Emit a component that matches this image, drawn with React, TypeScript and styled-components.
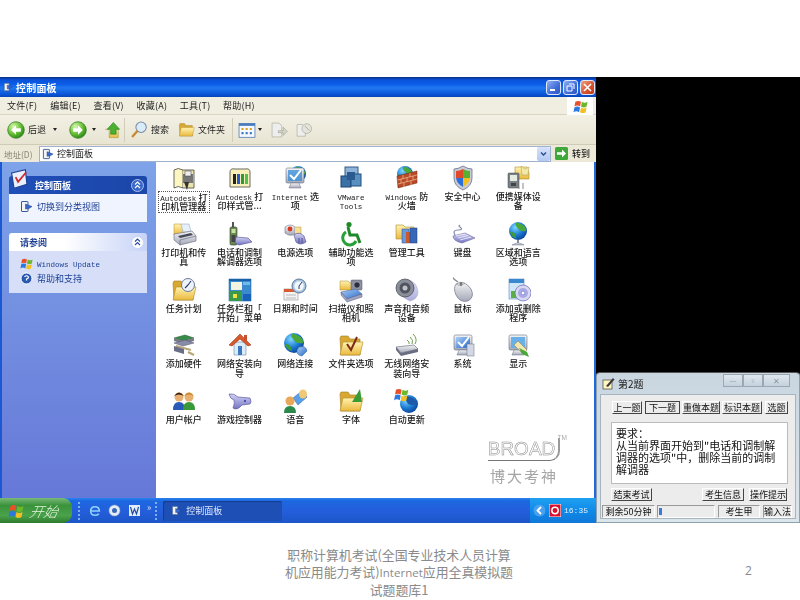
import React from "react";
import styled, { createGlobalStyle } from "styled-components";

const CJK = `"Noto Sans CJK SC", "Liberation Sans", sans-serif`;

const Global = createGlobalStyle`
  html, body { margin: 0; padding: 0; background: #fff; overflow: hidden; }
  #root { width: 800px; height: 600px; }
  * { box-sizing: border-box; }
`;

const Slide = styled.div`
  width: 800px; height: 600px; background: #fff; display: flex; flex-direction: column;
  padding-top: 77px; font-family: ${CJK}; position: relative;
`;
const Screen = styled.div`
  display: flex; height: 446px; filter: blur(0.35px); flex: none;
`;
const Win = styled.div`
  width: 596px; flex: none; display: flex; flex-direction: column; background: #ece9d8;
  position: relative;
`;
const TitleBar = styled.div`
  height: 20px; flex: none; display: flex; align-items: center; padding: 0 1px 0 3px;
  background: linear-gradient(180deg, #0a2f86 0, #0a52d8 14%, #0b5ce8 35%, #1f78f0 55%, #0a56da 85%, #0846b8 100%);
`;
const TitleText = styled.span`
  color: #fff; font-size: 10px; font-weight: 700; margin-left: 3px; flex: 1; letter-spacing: 0.2px;
`;
const WinBtn = styled.span<{ $red?: boolean }>`
  width: 15px; height: 15px; margin-left: 2px; border-radius: 3px; border: 1px solid #dfe8fb;
  display: flex; align-items: center; justify-content: center;
  background: ${(p) => (p.$red ? "linear-gradient(135deg,#f0a080,#d8502c 60%,#c03a18)" : "linear-gradient(135deg,#8fb0f0,#3f6cd8 60%,#3058c0)")};
`;
const MenuBar = styled.div`
  height: 18px; flex: none; display: flex; align-items: center; padding: 0 0 0 7px;
  background: #f0eee0; border-bottom: 1px solid #d8d4c0; position: relative;
`;
const MenuItem = styled.span`
  width: 43.2px; font-size: 9px; letter-spacing: 0.25px; color: #222; white-space: nowrap;
`;
const LogoBox = styled.div`
  position: absolute; right: 3px; top: 0; width: 26px; height: 18px; background: #fff;
  display: flex; align-items: center; justify-content: center;
`;
const Toolbar = styled.div`
  height: 30px; flex: none; display: flex; align-items: center; padding-left: 7px;
  background: linear-gradient(180deg, #f3f1e5, #e7e4d2); border-bottom: 1px solid #cfcbb6;
`;
const Slot = styled.span<{ $ml?: number }>`
  margin-left: ${(p) => p.$ml ?? 0}px; display: flex; align-items: center; flex: none;
`;
const ToolText = styled.span<{ $ml?: number }>`
  margin-left: ${(p) => p.$ml ?? 3}px; font-size: 9px; color: #222; white-space: nowrap; flex: none;
`;
const Caret = styled.span<{ $ml: number }>`
  margin-left: ${(p) => p.$ml}px; width: 0; height: 0; flex: none;
  border-left: 2.5px solid transparent; border-right: 2.5px solid transparent; border-top: 3px solid #222;
`;
const Sep = styled.span<{ $ml: number }>`
  margin-left: ${(p) => p.$ml}px; width: 1px; height: 24px; background: #d0ccb8; flex: none;
`;
const AddrBar = styled.div`
  height: 17px; flex: none; display: flex; align-items: center; padding-left: 4px;
  background: #ece9d8;
`;
const AddrLabel = styled.span`
  width: 35px; font-size: 8.5px; color: #8a8878; white-space: nowrap; flex: none;
`;
const AddrInput = styled.div`
  width: 512px; height: 16px; flex: none; background: #fff; border: 1px solid #9fb2cf; display: flex;
  align-items: center; padding-left: 2px; font-size: 9px; color: #222;
`;
const AddrText = styled.span`
  margin-left: 3px; flex: 1;
`;
const Drop = styled.span`
  width: 13px; height: 14px; border-radius: 2px; background: linear-gradient(180deg,#d6e2fa,#b4c8f2);
  display: flex; align-items: center; justify-content: center;
`;
const GoText = styled.span`
  margin-left: 4px; font-size: 9px; color: #222; font-weight: 500;
`;
const Main = styled.div`
  flex: 1; display: flex; min-height: 0; background: #fff; border-left: 2px solid #1a58d4; border-right: 2px solid #2068e0;
`;
const Side = styled.div`
  width: 154px; flex: none; background: linear-gradient(180deg, #7ea3e8, #6678d8); padding: 14px 9px 0 7px;
  display: flex; flex-direction: column;
`;
const PanelHead = styled.div<{ $dark?: boolean }>`
  height: 18px; display: flex; align-items: center; border-radius: 3px 3px 0 0; padding-right: 3px; position: relative;
  background: ${(p) => (p.$dark ? "linear-gradient(90deg,#1f4fb8,#1c46a8)" : "linear-gradient(90deg,#fff 40%,#c6d3f7)")};
`;
const PanelTitle = styled.span<{ $dark?: boolean; $ml: number }>`
  flex: 1; margin-left: ${(p) => p.$ml}px; font-size: 9px; font-weight: 700;
  color: ${(p) => (p.$dark ? "#fff" : "#1c3f94")};
`;
const PanelIcon = styled.span`
  position: absolute; left: 1px; top: -7px; display: flex;
`;
const Chevron = styled.span<{ $dark?: boolean }>`
  width: 13px; height: 13px; border-radius: 50%; display: flex; align-items: center; justify-content: center;
  background: ${(p) => (p.$dark ? "#3a68c8" : "#fff")}; border: 1px solid ${(p) => (p.$dark ? "#a9c0ee" : "#c6d3f7")};
`;
const PanelBody = styled.div<{ $tone: string; $h: number; $mb?: number }>`
  height: ${(p) => p.$h}px; background: ${(p) => p.$tone}; padding: 5px 0 0 11px;
  margin-bottom: ${(p) => p.$mb ?? 0}px; display: flex; flex-direction: column; gap: 1px;
`;
const SideLink = styled.div`
  display: flex; align-items: center; height: 14px; font-size: 9px; color: #1c3f94; white-space: nowrap;
`;
const SideLabel = styled.span`
  margin-left: 4px;
`;
const Mono = styled.span`
  font-family: "Liberation Mono", monospace; font-size: 7.5px; line-height: 1px;
`;
const Grid = styled.div`
  flex: 1; display: grid; grid-template-columns: repeat(7, 55.75px); grid-auto-rows: 55.75px; padding-top: 2px; position: relative;
  align-content: start;
`;
const Item = styled.div`
  display: flex; flex-direction: column; align-items: center; padding-top: 1px;
`;
const Label = styled.div<{ $sel?: boolean }>`
  margin-top: ${(p) => (p.$sel ? 0 : 1)}px; font-size: 9px; font-weight: 500; line-height: 9.4px; text-align: center; color: #1a1a1a;
  width: ${(p) => (p.$sel ? "52px" : "50px")}; white-space: pre-line;
  padding: ${(p) => (p.$sel ? "0.5px 0" : "0")}; border: ${(p) => (p.$sel ? "1px dotted #555" : "none")};
`;
const Watermark = styled.div`
  position: absolute; left: 333px; top: 276px; width: 70px; display: flex; flex-direction: column; align-items: center;
`;
const Broad = styled.span`
  font-family: "Liberation Sans", sans-serif; font-size: 19px; line-height: 22px; color: #fff;
  -webkit-text-stroke: 0.5px #8a8a8a; border-bottom: 1.5px solid #777; border-right: 2px solid #999; border-radius: 0 0 10px 0; padding-right: 3px;
`;
const Tm = styled.span`
  position: absolute; right: -8px; top: -4px; font-size: 6.5px; line-height: 8px; color: #aaa; font-family: "Liberation Sans", sans-serif;
`;
const WmCn = styled.span`
  font-size: 15px; line-height: 17px; margin-top: 6px; letter-spacing: 2px; color: #a5a5a5; white-space: nowrap;
`;
const Taskbar = styled.div`
  height: 25px; flex: none; display: flex; align-items: center; position: relative;
  background: linear-gradient(180deg, #2a82ee 0, #1c68e0 12%, #245edb 50%, #1d56c8 100%);
`;
const Start = styled.div`
  width: 72px; height: 100%; border-radius: 0 9px 9px 0; display: flex; align-items: center; padding-left: 8px;
  background: linear-gradient(180deg, #78b878, #3a923a 30%, #4aa24a 70%, #2e7a2e); flex: none;
`;
const StartText = styled.span`
  margin-left: 6px; font-style: italic; color: #e8f5e0; font-size: 14px;
  font-family: "Noto Sans CJK SC", serif; transform: skewX(-12deg); font-weight: 300;
`;
const Dots = styled.span<{ $ml: number }>`
  margin-left: ${(p) => p.$ml}px; width: 2px; height: 18px; flex: none;
  background: repeating-linear-gradient(180deg,#7fb0f0 0 2px,transparent 2px 4px);
`;
const Quick = styled.span<{ $ml: number }>`
  margin-left: ${(p) => p.$ml}px; flex: none; display: flex; align-items: center;
`;
const More = styled.span`
  margin-left: 6px; color: #cfe0ff; font-size: 9px; margin-top: -6px; flex: none;
`;
const TaskBtn = styled.div`
  margin-left: 6px; width: 119px; height: 20px; background: #1e4fb4; border-radius: 2px; display: flex; align-items: center;
  padding-left: 8px; color: #e0e8ff; font-size: 9px; flex: none; box-shadow: inset 1px 1px 1px #163c8c;
`;
const TaskText = styled.span`
  margin-left: 4px;
`;
const Tray = styled.div`
  margin-left: auto; height: 100%; width: 66px; flex: none; display: flex; align-items: center; padding-left: 3px;
  background: linear-gradient(180deg,#1fa0f0,#0f8ae8 50%,#1078d8);
`;
const Clock = styled.span`
  margin-left: 3px; color: #dff0ff; font-size: 8px; font-family: "Liberation Mono", monospace;
`;
const Right = styled.div`
  flex: 1; display: flex; flex-direction: column; background: #000;
`;
const Filler = styled.div`
  flex: 1;
`;
const Dialog = styled.div`
  height: 151px; flex: none; background: linear-gradient(180deg,#c9d6e0,#dbe5ec); padding: 0 3px 3px; border: 1px solid #8ea0ad; border-top: 1px solid #555;
  border-radius: 4px 4px 0 0; display: flex; flex-direction: column;
`;
const DlgTitle = styled.div`
  height: 21px; flex: none; display: flex; align-items: center; font-size: 10px; color: #222; padding-left: 2px;
`;
const DlgName = styled.span`
  margin-left: 3px; flex: 1;
`;
const DlgCtl = styled.span<{ $w: number }>`
  width: ${(p) => p.$w}px; height: 13px; flex: none; border: 1px solid #9aa8b4; margin-top: -6px; display: flex; align-items: center; justify-content: center;
  background: linear-gradient(180deg,#dfe7ee,#c4d1dc); color: #8a98a4; font-size: 8px; line-height: 10px;
`;
const DlgBody = styled.div`
  flex: 1; background: #ececec; border: 1px solid #a8b4bd; display: flex; flex-direction: column; padding: 6px 3px 2px 3px; min-height: 0;
`;
const BtnRow = styled.div<{ $ml: number }>`
  display: flex; align-items: center; padding-left: ${(p) => p.$ml}px; height: 13px; flex: none;
`;
const QBtn = styled.span<{ $w: number; $ml: number; $on?: boolean }>`
  width: ${(p) => p.$w}px; margin-left: ${(p) => p.$ml}px; height: 13px; flex: none; font-size: 9px; line-height: 11px; text-align: center; color: #111;
  white-space: nowrap; background: #ececec;
  border: 1px solid ${(p) => (p.$on ? "#444" : "#fff")};
  border-right-color: #444; border-bottom-color: #444;
`;
const QText = styled.div`
  margin: 8px 0 0 7px; width: 177px; height: 62px; flex: none; background: #fff; border: 1px solid #bbb; padding: 4px 3px 0 4px;
  font-size: 11px; line-height: 12px; color: #111;
`;
const BtnRow2 = styled(BtnRow)`
  margin-top: 3px; height: 14px;
`;
const Status = styled.div`
  margin-top: 4px; display: flex; height: 13px; flex: none; align-items: stretch;
`;
const Cell = styled.span<{ $w: number; $ml?: number }>`
  width: ${(p) => p.$w}px; margin-left: ${(p) => p.$ml ?? 0}px; flex: none; font-size: 9px; line-height: 11px; text-align: center; color: #111;
  white-space: nowrap; border: 1px solid #999; border-right-color: #fff; border-bottom-color: #fff; display: flex; align-items: center; justify-content: center;
`;
const ProgressCell = styled(Cell)`
  justify-content: flex-start; padding: 2px 1px;
`;
const ProgressFill = styled.span`
  width: 3px; height: 100%; background: #3a7ad8;
`;
const Footer = styled.div`
  width: 230px; margin: 23px 0 0 284px; text-align: center; color: #8a8a8a; font-size: 12.9px; line-height: 17px; white-space: nowrap;
  font-family: "Noto Sans CJK SC", "Open Sans", sans-serif;
`;
const FooterLat = styled.span`
  font-family: "Open Sans", sans-serif; font-size: 11.5px;
`;
const PageNo = styled.span`
  position: absolute; left: 745px; top: 562px; font-size: 12px; color: #8a8a8a; font-family: "Open Sans", sans-serif;
`;

/* ---------- drawings ---------- */
const Defs = () => (
  <svg width="0" height="0" style={{ position: "absolute" }}>
    <defs>
      <linearGradient id="fo" x1="0" y1="0" x2="0" y2="1"><stop offset="0" stopColor="#fff3b0" /><stop offset="1" stopColor="#eab93e" /></linearGradient>
      <radialGradient id="gl" cx=".35" cy=".3" r=".8"><stop offset="0" stopColor="#7fd8ff" /><stop offset=".55" stopColor="#1a78d0" /><stop offset="1" stopColor="#0a3a90" /></radialGradient>
      <radialGradient id="gn" cx=".35" cy=".3" r=".8"><stop offset="0" stopColor="#d8f8b0" /><stop offset=".6" stopColor="#5cb82c" /><stop offset="1" stopColor="#1f7a1a" /></radialGradient>
      <linearGradient id="gy" x1="0" y1="0" x2="0" y2="1"><stop offset="0" stopColor="#f4f4f4" /><stop offset="1" stopColor="#a4a8b8" /></linearGradient>
      <linearGradient id="pu" x1="0" y1="0" x2="0" y2="1"><stop offset="0" stopColor="#d4d4f4" /><stop offset="1" stopColor="#7474c4" /></linearGradient>
      <linearGradient id="mo" x1="0" y1="0" x2="1" y2="1"><stop offset="0" stopColor="#a8d0f8" /><stop offset="1" stopColor="#2a68c8" /></linearGradient>
    </defs>
  </svg>
);

const Svg = ({ s = 26, children }: { s?: number; children: React.ReactNode }) => (
  <svg width={s} height={s} viewBox="0 0 26 26" style={{ flex: "none", display: "block" }}>{children}</svg>
);

const Fold = () => (
  <>
    <path d="M2 6 L3 4 H10 L12 7 H22 V23 H3 Z" fill="#d8a832" stroke="#a07d20" strokeWidth=".6" />
    <path d="M2 23 L5 10 H25 L22 23 Z" fill="url(#fo)" stroke="#b08a2a" strokeWidth=".6" />
  </>
);
const Flag = ({ x = 0, y = 0, k = 1 }: { x?: number; y?: number; k?: number }) => (
  <g transform={`translate(${x} ${y}) scale(${k})`}>
    <path d="M1 3 Q4 1 7 3 L6 8 Q3 6 0 8Z" fill="#e8502a" />
    <path d="M8 3 Q11 5 14 3 L13 8 Q10 10 7 8Z" fill="#6cb82c" />
    <path d="M0 9 Q3 7 6 9 L5 14 Q2 12 -1 14Z" fill="#2a78e0" />
    <path d="M7 9 Q10 11 13 9 L12 14 Q9 16 6 14Z" fill="#f4c020" />
  </g>
);
const Globe = ({ cx = 13, cy = 12, r = 9 }: { cx?: number; cy?: number; r?: number }) => (
  <>
    <circle cx={cx} cy={cy} r={r} fill="url(#gl)" />
    <path d={`M${cx - r * 0.2} ${cy - r * 0.95} Q${cx + r} ${cy - r * 0.7} ${cx + r * 0.9} ${cy} Q${cx + r * 0.2} ${cy + r * 0.1} ${cx} ${cy - r * 0.3} Q${cx - r * 0.4} ${cy - r * 0.7} ${cx - r * 0.2} ${cy - r * 0.95}Z`} fill="#4aa83a" />
    <path d={`M${cx - r * 0.9} ${cy + r * 0.1} Q${cx - r * 0.3} ${cy} ${cx - r * 0.2} ${cy + r * 0.8} Q${cx - r * 0.7} ${cy + r * 0.7} ${cx - r * 0.9} ${cy + r * 0.1}Z`} fill="#3f9a38" />
  </>
);
const Monitor = ({ screen = "url(#mo)" }: { screen?: string }) => (
  <>
    <rect x="4" y="3" width="18" height="15" rx="1.5" fill="url(#gy)" stroke="#6a7088" strokeWidth=".6" />
    <rect x="6" y="5" width="14" height="11" fill={screen} />
    <path d="M9 18 H17 L19 23 H7 Z" fill="url(#gy)" stroke="#6a7088" strokeWidth=".5" />
  </>
);
const Check = ({ c = "#fff", w = 2 }: { c?: string; w?: number }) => (
  <path d="M8 10 L12 14 L19 5" fill="none" stroke={c} strokeWidth={w} />
);
const Person = ({ x, c, h }: { x: number; c: string; h: string }) => (
  <>
    <circle cx={x} cy="9" r="4.5" fill="#e8b070" />
    <path d={`M${x - 5} 8 Q${x} 1 ${x + 5} 8 Q${x} 5 ${x - 5} 8Z`} fill={h} />
    <path d={`M${x - 6} 22 Q${x - 6} 14 ${x} 14 Q${x + 6} 14 ${x + 6} 22Z`} fill={c} />
  </>
);

const icons: React.ReactNode[] = [
  <Svg key="0"><path d="M3 5 Q7 2 12 5 V23 Q7 20 3 23Z" fill="#fdf6c0" stroke="#444" strokeWidth=".8" /><path d="M12 5 H23 V23 H12" fill="#ece4a8" stroke="#444" strokeWidth=".8" /><rect x="12" y="9" width="10" height="9" fill="#777" /><rect x="14" y="6" width="6" height="5" fill="#eee" stroke="#444" strokeWidth=".5" /><path d="M13 17 l3 8 l2 -8Z" fill="#333" /></Svg>,
  <Svg key="1"><path d="M3 7 Q3 3 8 4 H18 Q23 3 23 7 V22 H3Z" fill="#f8f0b8" stroke="#444" strokeWidth=".8" /><rect x="6" y="9" width="3" height="10" fill="#222" /><rect x="10" y="9" width="3" height="10" fill="#2a58c8" /><rect x="14" y="9" width="3" height="10" fill="#2a9a3a" /><rect x="18" y="9" width="3" height="10" fill="#50c050" /></Svg>,
  <Svg key="2"><Globe cx={16} cy={9} r={8} /><Monitor screen="none" /><rect x="6" y="5" width="14" height="11" fill="#2a88d8" opacity=".7" /><Check /></Svg>,
  <Svg key="3"><rect x="7" y="2" width="13" height="12" fill="#8fb4d8" stroke="#345a8a" /><rect x="3" y="11" width="10" height="11" fill="#3a72a8" stroke="#1f4270" /><rect x="13" y="9" width="10" height="12" fill="#5a90c0" stroke="#234e7e" /><rect x="9" y="7" width="8" height="8" fill="#2a5a90" /></Svg>,
  <Svg key="4"><Globe cx={11} cy={9} r={8} /><path d="M3 11 L23 6 V18 L4 23Z" fill="#b84a28" stroke="#6a2210" strokeWidth=".5" /><path d="M3.5 15 L23 10 M4 19 L23 14 M9 10 V14 M16 8 V12 M7 14 V18 M13 13 V17 M19 11 V15 M10 18 V22 M17 16 V20" stroke="#ecb28a" strokeWidth=".8" fill="none" /></Svg>,
  <Svg key="5"><path d="M13 1 Q18 4 22 4 V13 Q22 21 13 25 Q4 21 4 13 V4 Q8 4 13 1Z" fill="#c8ccd8" stroke="#59607a" strokeWidth=".7" /><path d="M13 4 V13 H6 V6 Q10 6 13 4Z" fill="#e04a28" /><path d="M13 4 Q16 6 20 6 V13 H13Z" fill="#58b030" /><path d="M6 13 H13 V22 Q7 19 6 13Z" fill="#2a70d8" /><path d="M13 13 H20 Q19 19 13 22Z" fill="#f4c020" /></Svg>,
  <Svg key="6"><path d="M10 2 H22 L24 8 V14 H10Z" fill="url(#fo)" stroke="#b08a2a" strokeWidth=".6" /><path d="M16 1 L20 4 L24 2 L23 10 L17 10Z" fill="#f4e8a8" stroke="#a89a50" strokeWidth=".5" /><rect x="3" y="8" width="11" height="15" rx="1" fill="#7a8088" stroke="#444" strokeWidth=".5" /><rect x="5" y="10" width="7" height="6" fill="#e4ece0" /><path d="M14 22 V24 M18 18 V24" stroke="#888" /><rect x="6" y="18" width="5" height="3" fill="#444" /></Svg>,
  <Svg key="7"><path d="M3 3 H10 L12 6 H18 V14 H3Z" fill="url(#fo)" stroke="#b08a2a" strokeWidth=".5" /><path d="M10 3 H18 L20 11 H12Z" fill="#e8f0fa" stroke="#8a9ab8" strokeWidth=".5" /><path d="M3 13 L21 10 L25 15 V20 L9 24 L3 19Z" fill="url(#gy)" stroke="#606478" strokeWidth=".6" /><path d="M9 24 V19 L25 15" fill="none" stroke="#606478" strokeWidth=".6" /><path d="M7 15 L20 12 L22 14 L9 17Z" fill="#444858" /></Svg>,
  <Svg key="8"><rect x="5" y="1" width="2" height="6" fill="#555" /><rect x="3" y="6" width="7" height="18" rx="1.5" fill="#6a8a50" stroke="#333" strokeWidth=".6" /><rect x="4.5" y="8" width="4" height="4" fill="#c8e0a0" /><rect x="4.5" y="14" width="4" height="7" fill="#444" /><path d="M9 16 L21 17 L25 21 L12 24 L8 22Z" fill="url(#pu)" stroke="#4a4a90" strokeWidth=".6" /></Svg>,
  <Svg key="9"><path d="M3 6 Q8 2 13 6 L13 13 Q8 16 3 12Z" fill="url(#gy)" stroke="#707488" strokeWidth=".6" /><circle cx="8" cy="8" r="2.4" fill="#d83a20" /><path d="M13 6 H19 V13 H13" fill="#f8e090" stroke="#a89048" strokeWidth=".5" /><path d="M12 14 Q17 10 22 15 L24 21 Q18 25 14 21Z" fill="url(#pu)" stroke="#50508a" strokeWidth=".6" /><path d="M17 17 V22 M20 17 V22" stroke="#50508a" /></Svg>,
  <Svg key="10"><circle cx="11" cy="3.5" r="2.6" fill="#1f8a2a" /><path d="M10 6 L12 14 H19 L22 22" fill="none" stroke="#1f8a2a" strokeWidth="3" /><path d="M8 11 A7 7 0 1 0 18 20" fill="none" stroke="#2aa03a" strokeWidth="3" /></Svg>,
  <Svg key="11"><path d="M2 4 H9 L11 6 H20 V18 H2Z" fill="url(#fo)" stroke="#a88a30" strokeWidth=".6" /><rect x="8" y="8" width="7" height="14" fill="#6a98d8" stroke="#2a4a88" strokeWidth=".5" /><rect x="12" y="11" width="4" height="11" fill="#c85a30" /><rect x="16" y="7" width="7" height="15" fill="#3a68b8" stroke="#1a3a78" strokeWidth=".5" /></Svg>,
  <Svg key="12"><path d="M3 15 L15 12 L25 17 L12 22 Q3 20 3 15Z" fill="url(#pu)" stroke="#6a6a98" strokeWidth=".6" /><path d="M6 15 L15 13 M8 17 L18 14.5 M10 19 L21 16" stroke="#f4f4ff" strokeWidth=".8" /><path d="M5 14 Q2 9 8 9 Q14 9 10 6 Q8 5 10 4" fill="none" stroke="#8088a8" strokeWidth="1.2" /></Svg>,
  <Svg key="13"><Globe cx={13} cy={10} r={9} /><path d="M13 19 V22" stroke="#8a8ea0" strokeWidth="2" /><path d="M7 24 Q13 20 19 24Z" fill="url(#gy)" stroke="#707488" strokeWidth=".5" /></Svg>,
  <Svg key="14"><Fold /><circle cx="17" cy="8" r="6.5" fill="#eef2fa" stroke="#6a7a9a" /><path d="M17 8 L20 4 M17 8 L14 11" stroke="#2a3a6a" strokeWidth="1.1" /></Svg>,
  <Svg key="15"><rect x="2" y="2" width="22" height="22" fill="#3a8ad0" stroke="#1a5a9a" strokeWidth=".5" /><rect x="4" y="5" width="11" height="8" fill="#f4f4e0" /><rect x="2" y="14" width="13" height="10" fill="#3a9a4a" /><rect x="6" y="17" width="4" height="4" fill="#f4e040" /><rect x="16" y="5" width="7" height="3" fill="#70b8f0" /><rect x="16" y="17" width="8" height="7" fill="#1860b8" /><rect x="2" y="2" width="22" height="2" fill="#1860a8" /></Svg>,
  <Svg key="16"><rect x="2" y="12" width="14" height="11" fill="#f4f4f4" stroke="#909090" strokeWidth=".6" /><rect x="2" y="12" width="14" height="3" fill="#d85a30" /><path d="M4 18 H14 M4 21 H14" stroke="#b8b8b8" /><circle cx="17" cy="9" r="7" fill="#a8c4e0" stroke="#5a7a9a" /><circle cx="17" cy="9" r="4.8" fill="#f0f6fc" /><path d="M17 9 L20 5 M17 9 V12" stroke="#2a3a6a" strokeWidth="1" /></Svg>,
  <Svg key="17"><path d="M2 4 H10 L12 6 H18 V13 H2Z" fill="url(#fo)" stroke="#a88a30" strokeWidth=".5" /><rect x="13" y="3" width="11" height="10" rx="1" fill="#8a8e9a" stroke="#50546a" strokeWidth=".5" /><circle cx="19" cy="8" r="3.2" fill="#2a2e44" stroke="#ccc" strokeWidth=".6" /><path d="M3 15 L18 12 L24 17 L9 22Z" fill="url(#mo)" stroke="#4a5a90" strokeWidth=".5" /><path d="M3 15 V18 L9 25 L24 20 V17 L9 22Z" fill="#a0a4c0" stroke="#5a5e80" strokeWidth=".5" /></Svg>,
  <Svg key="18"><path d="M13 3 Q23 4 24 15 Q24 22 16 24 Q10 22 6 16Z" fill="url(#pu)" stroke="#6a6a98" strokeWidth=".5" opacity=".6" /><circle cx="11" cy="11" r="9" fill="#8a8e98" stroke="#40444e" strokeWidth=".7" /><circle cx="11" cy="11" r="5.5" fill="#50545e" /><circle cx="11" cy="11" r="2.5" fill="#bfc2c8" /></Svg>,
  <Svg key="19"><path d="M8 5 Q2 1 4 1" fill="none" stroke="#888" strokeWidth="1.4" /><path d="M6 7 Q14 2 21 12 Q25 20 18 24 Q10 26 6 18 Q3 11 6 7Z" fill="url(#gy)" stroke="#70748a" strokeWidth=".7" /><path d="M6 7 Q10 10 15 6" fill="none" stroke="#80849a" strokeWidth=".6" /><ellipse cx="11" cy="7" rx="1.4" ry="2" fill="#777" /></Svg>,
  <Svg key="20"><rect x="4" y="2" width="15" height="20" fill="#cfe6f8" stroke="#5a88b8" strokeWidth=".6" /><rect x="4" y="2" width="15" height="4" fill="#3a88d0" /><rect x="6" y="14" width="6" height="7" fill="#58b040" /><circle cx="18" cy="16" r="8" fill="#d8d8f4" stroke="#6a6ab8" strokeWidth=".7" /><circle cx="18" cy="16" r="5" fill="#a8a8e4" /><circle cx="18" cy="16" r="1.8" fill="#fff" stroke="#6a6ab8" strokeWidth=".5" /></Svg>,
  <Svg key="21"><path d="M3 6 L14 3 L23 6 L12 9Z" fill="#3a8a4a" stroke="#1f5a2a" strokeWidth=".5" /><path d="M3 6 V9 L12 12 L23 9 V6 L12 9Z" fill="#7a7a8a" /><path d="M3 11 L14 8 L23 11 L12 14Z" fill="#888ca8" stroke="#50546a" strokeWidth=".5" /><path d="M5 14 L20 18 M17 20 L23 23" stroke="#b8a878" strokeWidth="2.2" /><path d="M3 14 L13 17 V22 L3 19Z" fill="#6a6e88" /></Svg>,
  <Svg key="22"><path d="M7 10 H19 V23 H7Z" fill="#dcecfa" stroke="#6a8ab0" strokeWidth=".6" /><path d="M2 13 L13 2 L24 13 L21 14 L13 7 L5 14Z" fill="#d8582c" stroke="#8a2a10" strokeWidth=".5" /><rect x="11" y="14" width="4" height="9" fill="#3a78c0" /><rect x="17" y="3" width="3" height="6" fill="#c8502a" /></Svg>,
  <Svg key="23"><Globe cx={12} cy={11} r={10} /><path d="M17 15 Q24 13 25 19 L20 24 Q14 23 15 18Z" fill="url(#mo)" stroke="#2a5a98" strokeWidth=".5" /></Svg>,
  <Svg key="24"><Fold /><path d="M9 12 L13 18 L19 5" fill="none" stroke="#7a2a18" strokeWidth="2" /></Svg>,
  <Svg key="25"><path d="M2 15 L20 13 L24 17 L7 21Z" fill="url(#gy)" stroke="#606478" strokeWidth=".6" /><path d="M2 15 V18 L7 24 L24 20 V17 L7 21Z" fill="#6a6e82" /><path d="M13 8 Q16 10 15 12 M16 5 Q20 8 18 12 M19 2 Q24 7 21 12" fill="none" stroke="#70a050" strokeWidth="1" /></Svg>,
  <Svg key="26"><Monitor /><Check /><rect x="17" y="12" width="7" height="12" fill="#d4d8e4" stroke="#6a7088" strokeWidth=".5" /></Svg>,
  <Svg key="27"><Monitor screen="#6ab0e8" /><path d="M13 9 L22 18 L18 22 L9 13Z" fill="#f0e8b0" stroke="#8a7a40" strokeWidth=".5" /><path d="M14 16 L22 20 L24 25 L17 22Z" fill="#48a83a" /></Svg>,
  <Svg key="28"><Person x={8} c="#2a5ab8" h="#3a2010" /><Person x={18} c="#3a9a3a" h="#c88a28" /></Svg>,
  <Svg key="29"><path d="M2 6 Q7 5 11 9 L23 10 Q25 14 23 16 L15 17 Q10 23 6 20 Q8 15 7 12 Q3 11 2 6Z" fill="url(#pu)" stroke="#4a4a98" strokeWidth=".6" /><circle cx="18" cy="13" r="1.2" fill="#5050a8" /></Svg>,
  <Svg key="30"><path d="M11 10 L20 3 L25 9 L16 17Z" fill="#5aa0e8" stroke="#2a5a98" strokeWidth=".5" /><ellipse cx="21" cy="6" rx="4" ry="4.5" fill="#f0c878" /><circle cx="8" cy="13" r="4.5" fill="#e8a858" /><path d="M2 25 Q2 18 8 18 Q14 18 14 25Z" fill="#2a8a4a" /></Svg>,
  <Svg key="31"><Fold /><path d="M14 14 L22 1 L24 14Z" fill="#3a9a38" /></Svg>,
  <Svg key="32"><circle cx="15" cy="16" r="9" fill="url(#gl)" /><path d="M10 9 Q18 6 24 16 Q18 18 14 16Z" fill="#1f5aa8" /><Flag x={1} y={-1} k={.95} /></Svg>,
];

const L = Mono;
const items: React.ReactNode[] = [
  <><L>Autodesk</L> 打{"\n"}印机管理器</>,
  <><L>Autodesk</L> 打{"\n"}印样式管...</>,
  <><L>Internet</L> 选{"\n"}项</>,
  <><L>VMware{"\n"}Tools</L></>,
  <><L>Windows</L> 防{"\n"}火墙</>,
  "安全中心", "便携媒体设\n备",
  "打印机和传\n真", "电话和调制\n解调器选项", "电源选项", "辅助功能选\n项", "管理工具", "键盘", "区域和语言\n选项",
  "任务计划", "任务栏和「\n开始」菜单", "日期和时间", "扫描仪和照\n相机", "声音和音频\n设备", "鼠标", "添加或删除\n程序",
  "添加硬件", "网络安装向\n导", "网络连接", "文件夹选项", "无线网络安\n装向导", "系统", "显示",
  "用户帐户", "游戏控制器", "语音", "字体", "自动更新",
];

const GreenArrow = ({ s = 18 }: { s?: number }) => (
  <Svg s={s}>
    <circle cx="13" cy="13" r="12" fill="url(#gn)" stroke="#2a7a1a" />
    <path d="M20 10.5 H13 V6 L6 13 L13 20 V15.5 H20Z" fill="#fff" />
  </Svg>
);
const PageIcon = ({ s = 11 }: { s?: number }) => (
  <Svg s={s}>
    <rect x="3" y="3" width="13" height="20" rx="1" fill="#f4f4f4" stroke="#3a5a98" strokeWidth="2" />
    <path d="M11 8 L24 13 L18 17 L11 18Z" fill="#3a6ac8" stroke="#1c3f94" />
  </Svg>
);
const Chev = ({ dark }: { dark?: boolean }) => (
  <svg width="7" height="8" viewBox="0 0 7 8" style={{ display: "block" }}>
    <path d="M1 3.5 L3.5 1 L6 3.5 M1 7 L3.5 4.5 L6 7" fill="none" stroke={dark ? "#fff" : "#2a4aa0"} strokeWidth="1.1" />
  </svg>
);

export default function App() {
  return (
    <>
      <Global />
      <Defs />
      <Slide>
        <Screen>
          <Win>
            <TitleBar>
              <PageIcon s={10} />
              <TitleText>控制面板</TitleText>
              <WinBtn>
                <svg width="9" height="9" viewBox="0 0 9 9"><rect x="1" y="6" width="5" height="2" fill="#fff" /></svg>
              </WinBtn>
              <WinBtn>
                <svg width="9" height="9" viewBox="0 0 9 9"><path d="M3 1 H8 V6 M1 3 H6 V8 H1Z" fill="none" stroke="#fff" strokeWidth="1" /></svg>
              </WinBtn>
              <WinBtn $red>
                <svg width="9" height="9" viewBox="0 0 9 9"><path d="M1 1 L8 8 M8 1 L1 8" stroke="#fff" strokeWidth="1.6" /></svg>
              </WinBtn>
            </TitleBar>
            <MenuBar>
              {["文件(F)", "编辑(E)", "查看(V)", "收藏(A)", "工具(T)", "帮助(H)"].map((m) => (
                <MenuItem key={m}>{m}</MenuItem>
              ))}
              <LogoBox>
                <svg width="15" height="15" viewBox="0 0 14 16"><Flag x={.5} y={0} /></svg>
              </LogoBox>
            </MenuBar>
            <Toolbar>
              <GreenArrow />
              <ToolText>后退</ToolText>
              <Caret $ml={7} />
              <Slot $ml={12}>
                <Svg s={18}>
                  <circle cx="13" cy="13" r="12" fill="url(#gn)" stroke="#2a7a1a" />
                  <path d="M6 10.5 H13 V6 L20 13 L13 20 V15.5 H6Z" fill="#fff" />
                </Svg>
              </Slot>
              <Caret $ml={5} />
              <Slot $ml={7}>
                <Svg s={18}>
                  <path d="M3 12 H9 V24 H22 V12 H16" fill="url(#fo)" stroke="#a88a30" strokeWidth=".8" />
                  <path d="M15 2 L24 12 H19 V19 H11 V12 H6Z" fill="#4ab030" stroke="#1f7a1a" strokeWidth=".8" />
                </Svg>
              </Slot>
              <Sep $ml={3} />
              <Slot $ml={5}>
                <Svg s={18}>
                  <circle cx="16" cy="9" r="7.5" fill="#d8ecfa" stroke="#7a8aa8" strokeWidth="1.5" />
                  <path d="M11 14 L3 23" stroke="#c88a30" strokeWidth="3.4" />
                </Svg>
              </Slot>
              <ToolText>搜索</ToolText>
              <Slot $ml={9}>
                <Svg s={17}>
                  <Fold />
                </Svg>
              </Slot>
              <ToolText>文件夹</ToolText>
              <Sep $ml={7} />
              <Slot $ml={5}>
                <Svg s={18}>
                  <rect x="1.5" y="3.5" width="23" height="20" fill="#f4f8ff" stroke="#3a68a8" />
                  <rect x="1.5" y="3.5" width="23" height="3.5" fill="#4a7ac0" />
                  <path d="M5 10 h3 v3 h-3z M11 10 h3 v3 h-3z M17 10 h3 v3 h-3z" fill="#d8a020" />
                  <path d="M5 16 h3 v3 h-3z M11 16 h3 v3 h-3z M17 16 h3 v3 h-3z" fill="#3a78c0" />
                </Svg>
              </Slot>
              <Caret $ml={2} />
              <Slot $ml={8}>
                <Svg s={18}>
                  <path d="M3 3 H13 L17 7 V23 H3Z" fill="#eee" stroke="#b0ae9c" />
                  <path d="M12 14 H19 V9 L25 15 L19 21 V17 H12Z" fill="#d4d4c8" stroke="#a8a89a" />
                </Svg>
              </Slot>
              <Slot $ml={7}>
                <Svg s={18}>
                  <path d="M3 5 H11 L15 9 V22 H3Z" fill="#eee" stroke="#b0ae9c" />
                  <circle cx="17" cy="11" r="7" fill="#e4e4da" stroke="#a8a89a" />
                  <path d="M14 7 L21 14" stroke="#b0ae9c" strokeWidth="1.4" />
                </Svg>
              </Slot>
            </Toolbar>
            <AddrBar>
              <AddrLabel>地址(D)</AddrLabel>
              <AddrInput>
                <PageIcon s={12} />
                <AddrText>控制面板</AddrText>
                <Drop>
                  <svg width="7" height="6" viewBox="0 0 7 6"><path d="M1 1.5 L3.5 4 L6 1.5" fill="none" stroke="#2a4a90" strokeWidth="1.4" /></svg>
                </Drop>
              </AddrInput>
              <Slot $ml={4}>
                <svg width="13" height="13" viewBox="0 0 13 13">
                  <rect width="13" height="13" rx="1.5" fill="#3fa83a" />
                  <path d="M2 5.2 H7 V2.5 L11 6.5 L7 10.5 V7.8 H2Z" fill="#fff" />
                </svg>
              </Slot>
              <GoText>转到</GoText>
            </AddrBar>
            <Main>
              <Side>
                <PanelHead $dark>
                  <PanelIcon>
                    <Svg s={21}>
                      <path d="M2 5 L19 1 L21 19 L5 24Z" fill="#e8f0ff" stroke="#1c3f94" strokeWidth="1.4" />
                      <path d="M7 10 L10 16 L20 4" fill="none" stroke="#d02a2a" strokeWidth="2.2" />
                    </Svg>
                  </PanelIcon>
                  <PanelTitle $dark $ml={26}>控制面板</PanelTitle>
                  <Chevron $dark><Chev dark /></Chevron>
                </PanelHead>
                <PanelBody $tone="#f0f4fe" $h={28} $mb={11}>
                  <SideLink>
                    <PageIcon s={13} />
                    <SideLabel>切换到分类视图</SideLabel>
                  </SideLink>
                </PanelBody>
                <PanelHead>
                  <PanelTitle $ml={11}>请参阅</PanelTitle>
                  <Chevron><Chev /></Chevron>
                </PanelHead>
                <PanelBody $tone="#d6dff7" $h={42}>
                  <SideLink>
                    <svg width="13" height="13" viewBox="0 0 14 16"><Flag x={.5} y={0} /></svg>
                    <SideLabel><Mono>Windows Update</Mono></SideLabel>
                  </SideLink>
                  <SideLink>
                    <Svg s={13}>
                      <circle cx="13" cy="13" r="11" fill="#2a58b0" stroke="#fff" strokeWidth="2" />
                      <path d="M9 10 Q13 5 17 10 Q17 13 13 14 V17" fill="none" stroke="#fff" strokeWidth="2.4" />
                    </Svg>
                    <SideLabel>帮助和支持</SideLabel>
                  </SideLink>
                </PanelBody>
              </Side>
              <Grid>
                {items.map((t, i) => (
                  <Item key={i}>
                    {icons[i]}
                    <Label $sel={i === 0}>{t}</Label>
                  </Item>
                ))}
                <Watermark>
                  <Broad>BROAD</Broad>
                  <Tm>TM</Tm>
                  <WmCn>博大考神</WmCn>
                </Watermark>
              </Grid>
            </Main>
            <Taskbar>
              <Start>
                <svg width="16" height="16" viewBox="0 0 14 16"><Flag x={.5} y={0} /></svg>
                <StartText>开始</StartText>
              </Start>
              <Dots $ml={6} />
              <Quick $ml={8}>
                <Svg s={14}>
                  <path d="M5 13 H21 Q21 5 13 5 Q5 5 5 13 Q5 21 13 21 Q18 21 20 18" fill="none" stroke="#8fd0ff" strokeWidth="3" />
                </Svg>
              </Quick>
              <Quick $ml={6}>
                <Svg s={13}>
                  <circle cx="13" cy="13" r="11" fill="#e4ecf8" stroke="#8ab" />
                  <circle cx="13" cy="13" r="5" fill="#3a68b8" />
                </Svg>
              </Quick>
              <Quick $ml={7}>
                <Svg s={13}>
                  <rect x="2" y="2" width="22" height="22" fill="#e4ecf8" />
                  <path d="M5 6 L9 20 L13 10 L17 20 L21 6" fill="none" stroke="#1c4aa0" strokeWidth="2.4" />
                </Svg>
              </Quick>
              <More>»</More>
              <Dots $ml={4} />
              <TaskBtn>
                <PageIcon s={11} />
                <TaskText>控制面板</TaskText>
              </TaskBtn>
              <Tray>
                <svg width="13" height="13" viewBox="0 0 13 13">
                  <circle cx="6.5" cy="6.5" r="6" fill="#4aa0f0" />
                  <path d="M8 3 L4.5 6.5 L8 10" fill="none" stroke="#fff" strokeWidth="1.8" />
                </svg>
                <Slot $ml={3}>
                  <svg width="12" height="13" viewBox="0 0 12 13">
                    <rect width="12" height="13" fill="#d8102a" stroke="#fff" />
                    <circle cx="6" cy="6.5" r="3.2" fill="none" stroke="#fff" strokeWidth="1.5" />
                  </svg>
                </Slot>
                <Clock>16:35</Clock>
              </Tray>
            </Taskbar>
          </Win>
          <Right>
            <Filler />
            <Dialog>
              <DlgTitle>
                <svg width="13" height="13" viewBox="0 0 13 13">
                  <rect x="1" y="3" width="9" height="9" fill="#fff8c0" stroke="#555" strokeWidth=".8" />
                  <path d="M4 9 L11 1 L12.5 2.5 L6 10Z" fill="#3a3a3a" />
                </svg>
                <DlgName>第2题</DlgName>
                <DlgCtl $w={20}>—</DlgCtl>
                <DlgCtl $w={20}>▫</DlgCtl>
                <DlgCtl $w={27}>✕</DlgCtl>
                <Slot $ml={6} />
              </DlgTitle>
              <DlgBody>
                <BtnRow $ml={8}>
                  <QBtn $w={30} $ml={0}>上一题</QBtn>
                  <QBtn $w={35} $ml={3} $on>下一题</QBtn>
                  <QBtn $w={38} $ml={2}>重做本题</QBtn>
                  <QBtn $w={40} $ml={2}>标识本题</QBtn>
                  <QBtn $w={23} $ml={3}>选题</QBtn>
                </BtnRow>
                <QText>
                  要求：
                  <br />
                  从当前界面开始到"电话和调制解
                  <br />
                  调器的选项"中，删除当前的调制
                  <br />
                  解调器
                </QText>
                <BtnRow2 $ml={7}>
                  <QBtn $w={41} $ml={0}>结束考试</QBtn>
                  <QBtn $w={42} $ml={50}>考生信息</QBtn>
                  <QBtn $w={38} $ml={5}>操作提示</QBtn>
                </BtnRow2>
                <Status>
                  <Cell $w={53} $ml={-2}>剩余50分钟</Cell>
                  <ProgressCell $w={58} $ml={2}><ProgressFill /></ProgressCell>
                  <Cell $w={42} $ml={3}>考生甲</Cell>
                  <Cell $w={29} $ml={3}>输入法</Cell>
                </Status>
              </DlgBody>
            </Dialog>
          </Right>
        </Screen>
        <Footer>
          职称计算机考试(全国专业技术人员计算
          <br />
          机应用能力考试)<FooterLat>Internet</FooterLat>应用全真模拟题
          <br />
          试题题库1
        </Footer>
        <PageNo>2</PageNo>
      </Slide>
    </>
  );
}
